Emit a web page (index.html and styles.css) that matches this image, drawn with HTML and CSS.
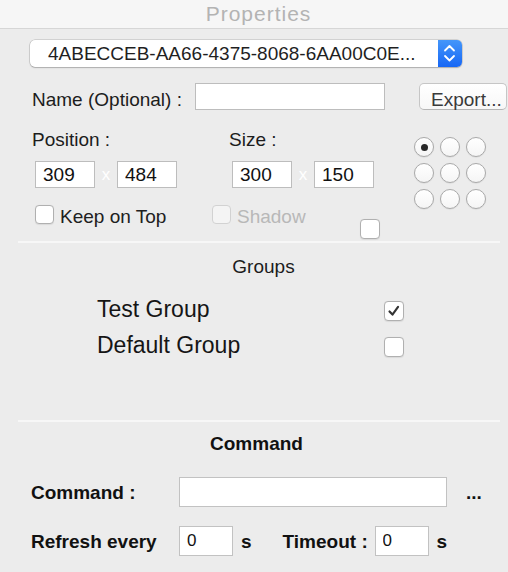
FILE: index.html
```html
<!DOCTYPE html>
<html lang="en">
<head>
    <meta charset="UTF-8">
    <meta name="viewport" content="width=device-width, initial-scale=1.0">
    <title>Properties</title>
    <link rel="stylesheet" href="styles.css">
</head>
<body>
    <header class="titlebar">Properties</header>

    <main class="panel">
        <div class="popup">
            <span class="popup-value">4ABECCEB-AA66-4375-8068-6AA00C0E...</span>
            <span class="popup-stepper">
                <svg viewBox="0 0 24 27" width="24" height="27">
                    <polyline points="7,10.5 11.5,6 16,10.5" fill="none" stroke="#fff" stroke-width="1.8" stroke-linecap="round" stroke-linejoin="round"/>
                    <polyline points="7,16 11.5,20.5 16,16" fill="none" stroke="#fff" stroke-width="1.8" stroke-linecap="round" stroke-linejoin="round"/>
                </svg>
            </span>
        </div>

        <div class="name-row">
            <span class="name-label">Name (Optional) :</span>
            <input type="text" class="text-field name-field" aria-label="Name">
            <button type="button" class="push-button">Export...</button>
        </div>

        <div class="geometry">
            <div class="geometry-fields">
                <div class="pair-grid">
                    <div class="pair">
                        <div class="pair-label">Position :</div>
                        <div class="pair-inputs">
                            <input type="text" class="text-field small-field" value="309">
                            <span class="times">x</span>
                            <input type="text" class="text-field small-field" value="484">
                        </div>
                    </div>
                    <div class="pair">
                        <div class="pair-label">Size :</div>
                        <div class="pair-inputs">
                            <input type="text" class="text-field small-field" value="300">
                            <span class="times">x</span>
                            <input type="text" class="text-field small-field" value="150">
                        </div>
                    </div>
                </div>
                <div class="option-row">
                    <label class="check keep">
                        <span class="checkbox"></span>
                        <span class="check-text">Keep on Top</span>
                    </label>
                    <label class="check disabled">
                        <span class="checkbox"></span>
                        <span class="check-text">Shadow</span>
                    </label>
                    <span class="checkbox lone"></span>
                </div>
            </div>
            <div class="anchor-grid">
                <span class="radio selected"></span>
                <span class="radio"></span>
                <span class="radio"></span>
                <span class="radio"></span>
                <span class="radio"></span>
                <span class="radio"></span>
                <span class="radio"></span>
                <span class="radio"></span>
                <span class="radio"></span>
            </div>
        </div>

        <div class="separator"></div>

        <section class="groups">
            <h2 class="groups-title">Groups</h2>
            <div class="group-list">
                <span class="group-name">Test Group</span>
                <span class="checkbox big checked">
                    <svg viewBox="0 0 20 20" width="18" height="18">
                        <path d="M5 10.5 L8.3 14 L14.5 5.5" fill="none" stroke="#333" stroke-width="2.4" stroke-linecap="round" stroke-linejoin="round"/>
                    </svg>
                </span>
                <span class="group-name">Default Group</span>
                <span class="checkbox big"></span>
            </div>
        </section>

        <div class="separator lower"></div>

        <section class="command">
            <h2 class="command-title">Command</h2>
            <div class="command-row">
                <span class="command-label">Command :</span>
                <input type="text" class="text-field command-field" aria-label="Command">
                <span class="dots">...</span>
            </div>
            <div class="command-row second">
                <span class="command-label">Refresh every</span>
                <input type="text" class="text-field seconds-field" value="0">
                <span class="unit">s</span>
                <span class="timeout-label">Timeout :</span>
                <input type="text" class="text-field seconds-field" value="0">
                <span class="unit">s</span>
            </div>
        </section>
    </main>
</body>
</html>
```

FILE: styles.css
```css
* {
    margin: 0;
    padding: 0;
    box-sizing: border-box;
}

body {
    font-family: 'Liberation Sans', Arial, sans-serif;
    font-size: 19px;
    background-color: #ECECEC;
    color: #1C1C1C;
    width: 508px;
    height: 572px;
    overflow: hidden;
}

.titlebar {
    height: 29px;
    line-height: 28px;
    background-color: #F6F6F6;
    border-bottom: 1px solid #D6D6D6;
    text-align: center;
    padding-left: 9px;
    font-size: 21px;
    letter-spacing: 1px;
    color: #B3B3B3;
}

.popup {
    display: flex;
    width: 432px;
    height: 27px;
    margin: 11px 0 0 30px;
    background: #FFFFFF;
    border-radius: 5px;
    box-shadow: 0 0 0 0.5px rgba(0,0,0,0.22), 0 1px 1.5px rgba(0,0,0,0.18);
}

.popup-value {
    flex: 1;
    line-height: 27px;
    padding-left: 18px;
    color: #1F1F1F;
    white-space: nowrap;
}

.popup-stepper {
    width: 24px;
    height: 27px;
    border-radius: 0 5px 5px 0;
    background: linear-gradient(#4496FA, #1767F5);
}

.popup-stepper svg {
    display: block;
}

.text-field {
    height: 27px;
    border: 1px solid #BDBDBD;
    background: #FFFFFF;
    font-family: inherit;
    font-size: 19px;
    color: #111111;
    padding: 0 7px;
    outline: none;
}

.name-row {
    display: flex;
    align-items: flex-start;
    height: 27px;
    margin-top: 16px;
    padding-left: 32px;
}

.name-label {
    width: 163px;
    line-height: 27px;
    padding-top: 3px;
    white-space: nowrap;
}

.name-field {
    width: 190px;
}

.push-button {
    width: 88px;
    height: 27px;
    margin-left: 34px;
    padding: 4px 0 0 11px;
    text-align: left;
    line-height: 24px;
    font-family: inherit;
    font-size: 19px;
    color: #3A3A3A;
    background: linear-gradient(#FFFFFF, #F7F7F7);
    border: 1px solid #C6C6C6;
    border-bottom-color: #B5B5B5;
    border-radius: 5px;
}

.geometry {
    display: flex;
    align-items: flex-start;
    padding: 19px 0 0 32px;
}

.geometry-fields {
    width: 348px;
}

.pair-grid {
    display: grid;
    grid-template-columns: 197px 151px;
}

.pair-label {
    line-height: 22px;
}

.pair-inputs {
    display: flex;
    margin: 10px 0 0 3px;
}

.small-field {
    width: 60px;
}

.times {
    width: 22px;
    text-align: center;
    line-height: 27px;
    font-size: 17px;
    color: #FFFFFF;
}

.option-row {
    display: flex;
    align-items: flex-start;
    margin-top: 17px;
    padding-left: 3px;
}

.check {
    display: flex;
    align-items: flex-start;
    gap: 6px;
}

.check.keep {
    width: 177px;
}

.check-text {
    line-height: 20px;
    padding-top: 2px;
    color: #202020;
}

.check.disabled .check-text {
    color: #B8B8B8;
}

.checkbox {
    display: flex;
    align-items: center;
    justify-content: center;
    width: 19px;
    height: 19px;
    background: #FFFFFF;
    border: 1px solid #B0B0B0;
    border-radius: 4px;
    box-shadow: 0 0.5px 1px rgba(0,0,0,0.08);
}

.check.disabled .checkbox {
    background: #F4F4F4;
    border-color: #D2D2D2;
    box-shadow: none;
}

.checkbox.lone {
    width: 20px;
    height: 20px;
    margin: 14px 0 0 auto;
}

.checkbox.big {
    width: 20px;
    height: 20px;
}

.anchor-grid {
    display: grid;
    grid-template-columns: repeat(3, 20px);
    gap: 6px;
    margin: 8px 22px 0 auto;
}

.radio {
    display: flex;
    align-items: center;
    justify-content: center;
    width: 20px;
    height: 20px;
    border-radius: 50%;
    border: 1px solid #A9A9A9;
    background: linear-gradient(#FFFFFF, #F5F5F5);
    box-shadow: 0 0.5px 1px rgba(0,0,0,0.1);
}

.radio.selected::after {
    content: '';
    width: 7px;
    height: 7px;
    border-radius: 50%;
    background: #2A2A2A;
}

.separator {
    height: 2px;
    margin: 2px 8px 0 18px;
    background: #F7F7F7;
}

.separator.lower {
    margin-top: 55px;
}

.groups-title,
.command-title {
    font-size: 19px;
    font-weight: normal;
    line-height: 22px;
    text-align: center;
}

.groups-title {
    margin-top: 13px;
    padding-left: 19px;
}

.group-list {
    display: grid;
    grid-template-columns: 287px 20px;
    grid-auto-rows: 36px;
    align-items: center;
    margin-top: 15px;
    padding-left: 97px;
}

.group-name {
    font-size: 23px;
    line-height: 26px;
    padding-bottom: 4px;
    color: #151515;
}

.command-title {
    margin-top: 11px;
    padding-left: 5px;
    font-weight: bold;
    color: #111111;
}

.command-row {
    display: flex;
    align-items: flex-start;
    margin-top: 22px;
    padding-left: 31px;
    font-weight: bold;
    color: #111111;
}

.command-row.second {
    margin-top: 18px;
}

.command-label {
    width: 148px;
    line-height: 30px;
    padding-top: 1px;
    white-space: nowrap;
}

.command-field {
    width: 268px;
    height: 30px;
    border-color: #C2C2C2;
}

.dots {
    margin-left: 19px;
    line-height: 30px;
    padding-top: 1px;
}

.seconds-field {
    width: 54px;
    height: 30px;
    font-size: 17px;
    border-color: #C2C2C2;
}

.unit {
    margin-left: 8px;
    line-height: 30px;
    padding-top: 1px;
}

.timeout-label {
    margin-left: 31px;
    line-height: 30px;
    padding-top: 1px;
    width: 92px;
    white-space: nowrap;
}
```
